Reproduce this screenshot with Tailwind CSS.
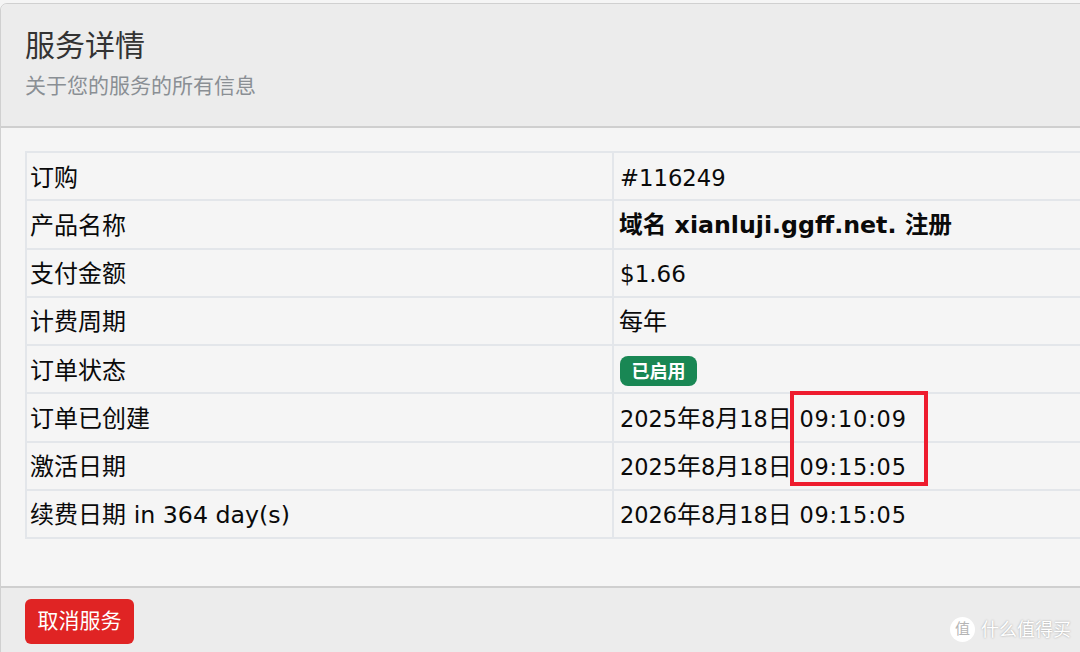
<!DOCTYPE html>
<html lang="zh-CN">
<head>
  <meta charset="UTF-8" />
  <title>服务详情</title>
  <script src="https://cdn.jsdelivr.net/npm/@tailwindcss/browser@4"></script>
</head>
<body class="bg-[#f5f5f5] font-['DejaVu_Sans','Noto_Sans_CJK_SC',sans-serif] text-[#0a0a0a]">
  <div class="relative w-[1080px] h-[652px] overflow-hidden">
    <!-- Panel -->
    <div class="mt-[3px] w-[1100px] h-[660px] border border-[#d0d0d0] rounded-tl-[7px] flex flex-col">
      <div class="h-[124px] shrink-0 bg-[#ececec] border-b-2 border-[#cfcfcf] rounded-tl-[7px] pl-[24px] pt-[20px]">
        <h1 class="text-[30px] leading-[44px] text-[#333] font-normal">服务详情</h1>
        <p class="text-[21px] leading-[28px] mt-[4px] text-[#8a8f94]">关于您的服务的所有信息</p>
      </div>
      <div class="h-[458px] shrink-0 pl-[24px] pt-[23px]">
        <table class="w-[1100px] table-fixed border-collapse text-[24px] border-2 border-[#e3e6ea]">
          <colgroup><col class="w-[587px]" /><col /></colgroup>
          <tbody>
            <tr class="h-[48.25px] border-b-2 border-[#e3e6ea]">
              <td class="pl-[3px] pt-[3px] pb-0">订购</td>
              <td class="pl-[6px] pt-[3px] pb-0 border-l-2 border-[#e3e6ea] text-[22.7px]">#116249</td>
            </tr>
            <tr class="h-[48.25px] border-b-2 border-[#e3e6ea]">
              <td class="pl-[3px] pt-[3px] pb-0">产品名称</td>
              <td class="pl-[5px] pt-[3px] pb-0 border-l-2 border-[#e3e6ea] font-bold text-[23.7px]">域名 xianluji.ggff.net. 注册</td>
            </tr>
            <tr class="h-[48.25px] border-b-2 border-[#e3e6ea]">
              <td class="pl-[3px] pt-[3px] pb-0">支付金额</td>
              <td class="pl-[6px] pt-[3px] pb-0 border-l-2 border-[#e3e6ea] text-[23px]">$1.66</td>
            </tr>
            <tr class="h-[48.25px] border-b-2 border-[#e3e6ea]">
              <td class="pl-[3px] pt-[3px] pb-0">计费周期</td>
              <td class="pl-[5px] pt-[3px] pb-0 border-l-2 border-[#e3e6ea]">每年</td>
            </tr>
            <tr class="h-[48.25px] border-b-2 border-[#e3e6ea]">
              <td class="pl-[3px] pt-[3px] pb-0">订单状态</td>
              <td class="pl-[6px] pt-[2px] pb-0 border-l-2 border-[#e3e6ea]">
                <span class="inline-flex items-center justify-center w-[77px] h-[30px] rounded-[8px] bg-[#198754] text-white text-[18px] font-bold align-middle">已启用</span>
              </td>
            </tr>
            <tr class="h-[48.25px] border-b-2 border-[#e3e6ea]">
              <td class="pl-[3px] pt-[3px] pb-0">订单已创建</td>
              <td class="pl-[6px] pt-[3px] pb-0 border-l-2 border-[#e3e6ea]"><span class="text-[22.4px]">2025</span>年<span class="text-[22.4px]">8</span>月<span class="text-[22.4px]">18</span>日 <span class="text-[22.4px] tracking-[0.85px]">09:10:09</span></td>
            </tr>
            <tr class="h-[48.25px] border-b-2 border-[#e3e6ea]">
              <td class="pl-[3px] pt-[3px] pb-0">激活日期</td>
              <td class="pl-[6px] pt-[3px] pb-0 border-l-2 border-[#e3e6ea]"><span class="text-[22.4px]">2025</span>年<span class="text-[22.4px]">8</span>月<span class="text-[22.4px]">18</span>日 <span class="text-[22.4px] tracking-[0.85px]">09:15:05</span></td>
            </tr>
            <tr class="h-[48.25px] border-b-2 border-[#e3e6ea]">
              <td class="pl-[3px] pt-[3px] pb-0">续费日期 <span class="text-[23.7px]">in 364 day(s)</span></td>
              <td class="pl-[6px] pt-[3px] pb-0 border-l-2 border-[#e3e6ea]"><span class="text-[22.4px]">2026</span>年<span class="text-[22.4px]">8</span>月<span class="text-[22.4px]">18</span>日 <span class="text-[22.4px] tracking-[0.85px]">09:15:05</span></td>
            </tr>
          </tbody>
        </table>
      </div>
      <div class="flex-1 bg-[#ececec] border-t-2 border-[#cfcfcf] pl-[24px] pt-[11px]">
        <button class="w-[109px] h-[45px] rounded-[6px] bg-[#e02424] text-white text-[21px]">取消服务</button>
      </div>
    </div>

    <!-- Red highlight drawn over the table -->
    <div class="absolute left-[790px] top-[391px] w-[138px] h-[95px] border-4 border-[#ee1c2e]"></div>

    <!-- Watermark -->
    <div class="absolute left-[950px] top-[616px] flex items-center gap-[6px]">
      <span class="w-[25px] h-[25px] rounded-full bg-white text-[#b5b5b5] text-[15px] flex items-center justify-center">值</span>
      <span class="text-[18px] text-white [text-shadow:0_0_2px_#999]">什么值得买</span>
    </div>
  </div>
</body>
</html>
